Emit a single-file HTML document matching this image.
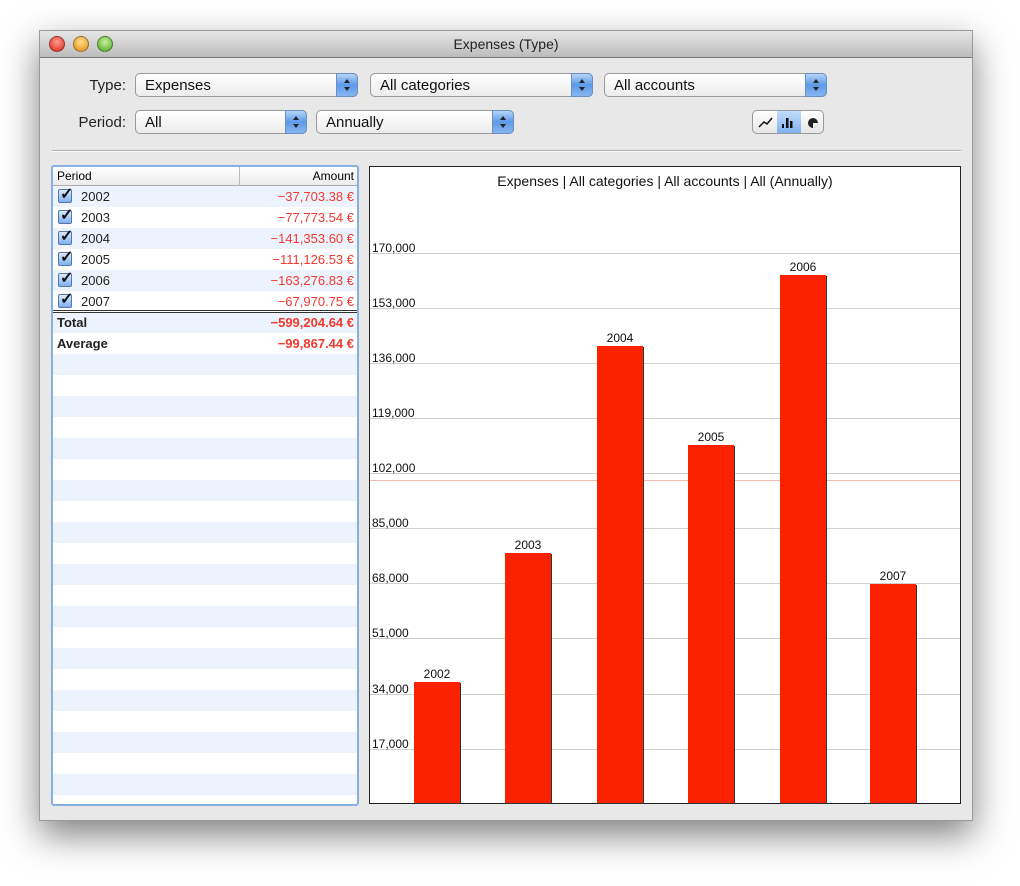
<!DOCTYPE html>
<html><head><meta charset="utf-8"><style>
*{box-sizing:border-box;margin:0;padding:0}
body{width:1020px;height:886px;background:#fff;font-family:"Liberation Sans",sans-serif;position:relative;overflow:hidden}
.win{position:absolute;left:39px;top:30px;width:934px;height:791px;background:#e8e8e8;border:1px solid #9a9a9a;box-shadow:0 14px 34px rgba(0,0,0,.5)}
.title{position:absolute;left:0;top:0;width:100%;height:27px;background:linear-gradient(#e6e6e6,#bcbcbc);border-bottom:1px solid #777;text-align:center;font-size:14px;line-height:27px;color:#222}
.dot{position:absolute;top:5px;width:16px;height:16px;border-radius:50%;border:1px solid rgba(0,0,0,.35)}
.a{position:absolute}
.lbl{position:absolute;font-size:15px;color:#222;text-align:right}
.pop{position:absolute;height:24px;border:1px solid #9a9a9a;border-radius:5px;background:linear-gradient(#fff,#ececec);font-size:15px;line-height:24px;padding-left:9px;color:#111}
.pop .ar{position:absolute;right:-1px;top:-1px;width:22px;height:24px;border-radius:0 5px 5px 0;background:linear-gradient(#b6d4f7,#5d9ae8 50%,#87b6f0);border:1px solid #6a8fc0}
.pop .ar:before{content:"";position:absolute;left:7px;top:5px;border:3px solid transparent;border-bottom:4px solid #222;border-top:none}
.pop .ar:after{content:"";position:absolute;left:7px;top:13px;border:3px solid transparent;border-top:4px solid #222;border-bottom:none}
.tbl{position:absolute;left:51px;top:165px;width:308px;height:641px;border:2px solid #86b0e0;border-radius:3px;background:repeating-linear-gradient(#edf3fd 0 21px,#fff 21px 42px);background-position:0 19px;overflow:hidden}
.hdr{position:absolute;left:0;top:0;width:100%;height:19px;background:linear-gradient(#fff,#ebebeb);border-bottom:1px solid #aaa;font-size:12px;line-height:19px}
.row{position:absolute;left:0;width:100%;height:21px;font-size:13px;line-height:21px}
.row .p{position:absolute;left:28px;color:#222}
.row .v{position:absolute;right:3px;color:#f03a2e}
.cb{position:absolute;left:5px;top:3px;width:14px;height:14px;border:1px solid #5577aa;border-radius:2px;background:linear-gradient(#dbeaff,#7fb0ee)}
.cb:after{content:"✓";position:absolute;left:1px;top:-6px;font-size:16px;font-weight:bold;color:#111}
.chart{position:absolute;left:369px;top:166px;width:592px;height:638px;background:#fff;border:1px solid #222}
.gl{position:absolute;left:0;width:100%;height:1px;background:#d0d0d0}
.yl{position:absolute;left:2px;font-size:12px;color:#111;margin-top:2px}
.bar{position:absolute;width:46px;background:#fb2200;box-shadow:1px 1px 0 #333}
.bl{position:absolute;width:46px;text-align:center;font-size:12px;color:#111}
</style></head><body>
<div class="win">
 <div class="title">Expenses (Type)
  <div class="dot" style="left:9px;background:radial-gradient(circle at 50% 35%,#ff9a8a,#d8261a)"></div>
  <div class="dot" style="left:33px;background:radial-gradient(circle at 50% 35%,#ffe08a,#e08a10)"></div>
  <div class="dot" style="left:57px;background:radial-gradient(circle at 50% 35%,#c8f09a,#4aa520)"></div>
 </div>
</div>
<div class="lbl" style="left:60px;top:77px;width:66px">Type:</div>
<div class="lbl" style="left:60px;top:114px;width:66px">Period:</div>
<div class="pop" style="left:135px;top:73px;width:223px">Expenses<div class="ar"></div></div>
<div class="pop" style="left:370px;top:73px;width:223px">All categories<div class="ar"></div></div>
<div class="pop" style="left:604px;top:73px;width:223px">All accounts<div class="ar"></div></div>
<div class="pop" style="left:135px;top:110px;width:172px">All<div class="ar"></div></div>
<div class="pop" style="left:316px;top:110px;width:198px">Annually<div class="ar"></div></div>
<div class="a" style="left:752px;top:110px;width:72px;height:24px;border:1px solid #9a9a9a;border-radius:5px;background:linear-gradient(#fff,#e6e6e6);overflow:hidden">
 <div class="a" style="left:24px;top:0;width:24px;height:22px;background:linear-gradient(#c3dcfa,#7fb2f0)"></div>
 <svg class="a" style="left:0;top:0" width="72" height="22"><polyline points="6,16 11,11 14,13 19,7" fill="none" stroke="#111" stroke-width="1.5"/><rect x="29" y="13" width="2" height="4" fill="#111"/><rect x="33" y="7" width="2.5" height="10" fill="#111"/><rect x="37" y="10" width="2.5" height="7" fill="#111"/><circle cx="60" cy="12" r="5" fill="#222"/><path d="M60 12 L65 12 A5 5 0 0 1 60 17 Z" fill="#eee"/></svg>
</div>
<div class="a" style="left:52px;top:150px;width:909px;height:1px;background:#b0b0b0"></div>
<div class="a" style="left:52px;top:151px;width:909px;height:1px;background:#fafafa"></div>

<div class="tbl">
 <div class="hdr"><span class="a" style="left:4px">Period</span><span class="a" style="left:186px;top:0;width:1px;height:19px;background:#bbb"></span><span class="a" style="right:3px">Amount</span></div>
 <div class="row" style="top:19px"><div class="cb"></div><span class="p">2002</span><span class="v">−37,703.38 €</span></div>
 <div class="row" style="top:40px"><div class="cb"></div><span class="p">2003</span><span class="v">−77,773.54 €</span></div>
 <div class="row" style="top:61px"><div class="cb"></div><span class="p">2004</span><span class="v">−141,353.60 €</span></div>
 <div class="row" style="top:82px"><div class="cb"></div><span class="p">2005</span><span class="v">−111,126.53 €</span></div>
 <div class="row" style="top:103px"><div class="cb"></div><span class="p">2006</span><span class="v">−163,276.83 €</span></div>
 <div class="row" style="top:124px"><div class="cb"></div><span class="p">2007</span><span class="v">−67,970.75 €</span></div>
 <div class="a" style="left:0;top:143px;width:100%;height:3px;border-top:1px solid #333;border-bottom:1px solid #333"></div>
 <div class="row" style="top:145px;font-weight:bold"><span class="p" style="left:4px">Total</span><span class="v">−599,204.64 €</span></div>
 <div class="row" style="top:166px;font-weight:bold"><span class="p" style="left:4px">Average</span><span class="v">−99,867.44 €</span></div>
</div>

<div class="chart">
 <div class="a" style="left:0;top:6px;width:100%;text-align:center;font-size:14px;color:#111">Expenses | All categories | All accounts | All (Annually)</div>
 <div class="gl" style="top:86px"></div><div class="yl" style="top:72px">170,000</div>
 <div class="gl" style="top:141px"></div><div class="yl" style="top:127px">153,000</div>
 <div class="gl" style="top:196px"></div><div class="yl" style="top:182px">136,000</div>
 <div class="gl" style="top:251px"></div><div class="yl" style="top:237px">119,000</div>
 <div class="gl" style="top:306px"></div><div class="yl" style="top:292px">102,000</div>
 <div class="gl" style="top:313px;background:#f8b8b0"></div>
 <div class="gl" style="top:361px"></div><div class="yl" style="top:347px">85,000</div>
 <div class="gl" style="top:416px"></div><div class="yl" style="top:402px">68,000</div>
 <div class="gl" style="top:471px"></div><div class="yl" style="top:457px">51,000</div>
 <div class="gl" style="top:527px"></div><div class="yl" style="top:513px">34,000</div>
 <div class="gl" style="top:582px"></div><div class="yl" style="top:568px">17,000</div>
 <div class="bar" style="left:44px;top:515px;height:121px"></div><div class="bl" style="left:44px;top:500px">2002</div>
 <div class="bar" style="left:135px;top:386px;height:250px"></div><div class="bl" style="left:135px;top:371px">2003</div>
 <div class="bar" style="left:227px;top:179px;height:457px"></div><div class="bl" style="left:227px;top:164px">2004</div>
 <div class="bar" style="left:318px;top:278px;height:358px"></div><div class="bl" style="left:318px;top:263px">2005</div>
 <div class="bar" style="left:410px;top:108px;height:528px"></div><div class="bl" style="left:410px;top:93px">2006</div>
 <div class="bar" style="left:500px;top:417px;height:219px"></div><div class="bl" style="left:500px;top:402px">2007</div>
</div>
</body></html>
